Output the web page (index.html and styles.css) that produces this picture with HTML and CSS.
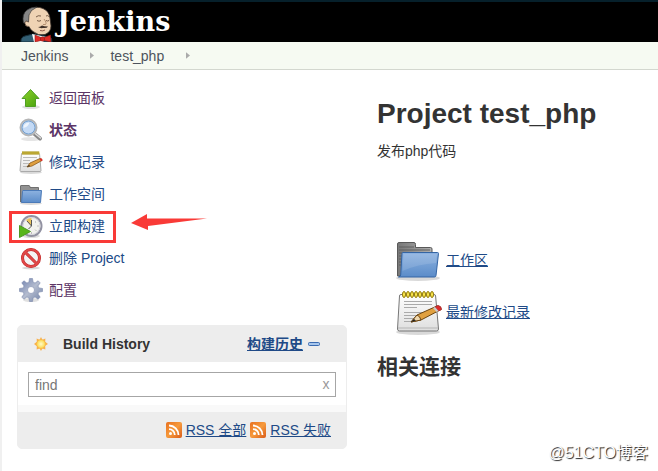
FILE: index.html
```
<!DOCTYPE html>
<html lang="zh-CN">
<head>
  <meta charset="utf-8">
  <title>test_php [Jenkins]</title>
  <link rel="stylesheet" href="styles.css">
</head>
<body>
  <!-- shared icon shapes -->
  <svg class="defs" width="0" height="0" aria-hidden="true">
    <defs>
      <linearGradient id="blue" x1="0" y1="0" x2="0" y2="1"><stop offset="0" stop-color="#8db2e0"/><stop offset="1" stop-color="#5b8cc9"/></linearGradient>
      <linearGradient id="grey" x1="0" y1="0" x2="1" y2="0"><stop offset="0" stop-color="#777"/><stop offset="1" stop-color="#b0b0b0"/></linearGradient>
      <linearGradient id="paper" x1="0" y1="0" x2="0" y2="1"><stop offset="0" stop-color="#fff"/><stop offset="1" stop-color="#dedede"/></linearGradient>
      <linearGradient id="green" x1="0" y1="0" x2="1" y2="1"><stop offset="0" stop-color="#8fd32c"/><stop offset="1" stop-color="#45a00c"/></linearGradient>
      <linearGradient id="orange" x1="0" y1="0" x2="1" y2="1"><stop offset="0" stop-color="#e8701f"/><stop offset=".5" stop-color="#f69a3c"/><stop offset="1" stop-color="#d95c1a"/></linearGradient>
      <linearGradient id="gear" x1="0" y1="0" x2="1" y2="1"><stop offset="0" stop-color="#6d7fae"/><stop offset=".5" stop-color="#b4bccf"/><stop offset="1" stop-color="#7283a8"/></linearGradient>
      <radialGradient id="sun"><stop offset="0" stop-color="#fffbc8"/><stop offset="1" stop-color="#fcd94a"/></radialGradient>
    </defs>
    <symbol id="folder" viewBox="0 0 48 48">
      <ellipse cx="24" cy="42" rx="22" ry="3" fill="#000" opacity=".15"/>
      <path d="M3.500 40V8q0-1.500 1.500-1.500h15q1.500 0 1.500 2V11.500h15q1.500 0 1.500 1.500v27z" fill="url(#grey)" stroke="#595959"/>
      <path d="M5 11h15M5 14h31M5 17h4M5 20h4M5 23h3M5 26h3M5 29h3" stroke="#5f5f5f"/>
      <path d="M9 16.500h34.500q1 0 1 1L42 39.500q-.2 1.500-1.500 1.500H4.500q2-.5 2.200-2L8 17.500q0-1 1-1z" fill="url(#blue)" stroke="#3465a4"/>
      <path d="M9.500 18h33.500L42 27Q24 28 8.500 35z" fill="#fff" opacity=".12"/>
    </symbol>
    <symbol id="notepad" viewBox="0 0 48 48">
      <ellipse cx="24" cy="44" rx="22" ry="3" fill="#000" opacity=".15"/>
      <path d="M7 6.500h33q1.500 0 1.600 1.500L44.500 41q0 2-2 2h-37q-2 0-2-2L5.500 8q0-1.500 1.500-1.500z" fill="url(#paper)" stroke="#777"/>
      <path d="M4 40h40" stroke="#b5b5b5"/>
      <path d="M10 13.500h28M10 16.500h28M10 19.500h13M10 24.500h24M10 27.500h22M10 30.500h14M10 33.500h12" stroke="#aaa"/>
      <g fill="#fce94f" stroke="#8a7100">
        <ellipse cx="10" cy="6.500" rx="1.500" ry="3"/><ellipse cx="14" cy="6.500" rx="1.500" ry="3"/><ellipse cx="18" cy="6.500" rx="1.500" ry="3"/><ellipse cx="22" cy="6.500" rx="1.500" ry="3"/><ellipse cx="26" cy="6.500" rx="1.500" ry="3"/><ellipse cx="30" cy="6.500" rx="1.500" ry="3"/><ellipse cx="34" cy="6.500" rx="1.500" ry="3"/><ellipse cx="38" cy="6.500" rx="1.500" ry="3"/>
      </g>
      <path d="M17 34l6-7L43 18q4 0 4 3.500L27 32z" fill="#e0a040" stroke="#6b4410"/>
      <path d="M17 34l6-7q3 1 4 5z" fill="#efd8ae" stroke="#6b4410"/>
      <path d="M17 34l3-3 2 1.500z" fill="#222"/>
      <path d="M41 19l3-1.500q3.500.5 3.500 4l-3 1.500z" fill="#e02a2a" stroke="#a33"/>
      <path d="M39 20l2-1 3.500 4-2 1z" fill="#ccc"/>
    </symbol>
    <symbol id="rss" viewBox="0 0 16 16">
      <rect width="16" height="16" rx="2" fill="url(#orange)"/>
      <circle cx="4.500" cy="11.500" r="1.500" fill="#fff"/>
      <path d="M3 7.200a5.800 5.800 0 0 1 5.800 5.800M3 3.500a9.500 9.500 0 0 1 9.500 9.500" fill="none" stroke="#fff" stroke-width="1.800"/>
    </symbol>
  </svg>

  <header class="header">
    <a class="logo" href="#">
      <svg class="butler" viewBox="0 0 34 36" aria-hidden="true">
        <path d="M1 36q-.5-5 4-6l8-2 12 2 5 1q2 1 2 5z" fill="#335f74" stroke="#17303c"/>
        <path d="M12 28l2 8h9l3-5z" fill="#fff"/>
        <path d="M5 17Q3 7 9 3.500 16-.5 23 2.500 29 5 30 12l1 8q0 6-6 8.500-7 1.500-12-3-3-2-4-5-4 0-4-3.500z" fill="#efd3b4" stroke="#3a302a" stroke-width=".8"/>
        <path d="M3.500 17Q1.500 8 7 4q4-3 10-3-7 3-8 8l-.5 7q-3-2-3.500 1z" fill="#858585" stroke="#333" stroke-width=".7"/>
        <path d="M8.500 16q-4-2-3.500 1.500.5 3.500 4 3" fill="#efd3b4" stroke="#5a4538" stroke-width=".7"/>
        <path d="M16 11q2-2 5-1M26 10q1.500-1 3 .5M17 14.500q2 1.500 4 0M26 14.500q1.500 1 3 0" fill="none" stroke="#59402f" stroke-width=".8"/>
        <path d="M24 13q3 4 1.500 5.500H23" fill="none" stroke="#a27d60" stroke-width=".8"/>
        <path d="M18 21q2 0 4-1.500 2 1 6 1-1 2-5 1.500-3 .5-5-1z" fill="#40332b"/>
        <path d="M20 24.500q3 1 5-.5" fill="none" stroke="#7a3b2c" stroke-width=".8"/>
        <path d="M15 29l6 2.500v3L15 36zM30.500 29l-6.500 2.500v3l7 1.500z" fill="#e22b27" stroke="#8c1512" stroke-width=".6"/>
        <circle cx="22.500" cy="33" r="2.200" fill="#d32421" stroke="#8c1512" stroke-width=".5"/>
      </svg>
      <span>Jenkins</span>
    </a>
  </header>

  <nav class="breadcrumbs">
    <a href="#">Jenkins</a>
    <svg class="chevron" viewBox="0 0 5 8" aria-hidden="true"><path d="M0 0l5 4-5 4z" fill="#aaa"/></svg>
    <a href="#">test_php</a>
    <svg class="chevron" viewBox="0 0 5 8" aria-hidden="true"><path d="M0 0l5 4-5 4z" fill="#aaa"/></svg>
  </nav>

  <div class="page-body">
    <aside class="side-panel">
      <ul class="tasks">
        <li class="task">
          <svg class="icon" viewBox="0 0 24 24" aria-hidden="true">
            <ellipse cx="12" cy="21" rx="9" ry="2" fill="#000" opacity=".13"/>
            <path d="M11.500 3.500l8.500 9h-3.500v8h-10v-8H3z" fill="url(#green)" stroke="#4f9f22"/>
          </svg>
          <a class="visited" href="#">返回面板</a>
        </li>
        <li class="task">
          <svg class="icon" viewBox="0 0 24 24" aria-hidden="true">
            <ellipse cx="12" cy="21" rx="10" ry="2" fill="#000" opacity=".1"/>
            <path d="M15 15.500l6 5" stroke="#888" stroke-width="4" stroke-linecap="round"/>
            <path d="M15.500 15l6 5" stroke="#ddd" stroke-width="1.500" stroke-linecap="round"/>
            <circle cx="9.500" cy="9.500" r="8" fill="#c4daf5" stroke="#b5b5b5" stroke-width="2"/>
            <circle cx="9.500" cy="9.500" r="6.500" fill="none" stroke="#729fcf"/>
            <path d="M4.500 10q-.5-5 6-5.500Q9 9 4.500 10z" fill="#fff" opacity=".7"/>
          </svg>
          <a class="visited current" href="#">状态</a>
        </li>
        <li class="task">
          <svg class="icon" viewBox="0 0 24 24" aria-hidden="true">
            <ellipse cx="12" cy="22.500" rx="11" ry="1.500" fill="#000" opacity=".15"/>
            <path d="M2.500 3.500h18l1.500 17q0 1-1 1H2q-1 0-1-1z" fill="url(#paper)" stroke="#aaa"/>
            <path d="M3 3h17" stroke="#93801a" stroke-width="3"/>
            <path d="M3.500 3h17" stroke="#e3cf4a" stroke-width="3" stroke-dasharray="1 1"/>
            <path d="M4 7.500h14M4 10.500h7M4 13.500h9M4 16.500h5" stroke="#bbb"/>
            <path d="M8 17l3-4 10-4.500q2 0 2 2L13 16z" fill="#e0a040" stroke="#8a5a1c" stroke-width=".8"/>
            <path d="M8 17l2-2 1 1z" fill="#222"/>
            <path d="M20.500 9l1.500-.7q1.500.5 1.500 2.200l-1.500.7z" fill="#e02a2a"/>
          </svg>
          <a href="#">修改记录</a>
        </li>
        <li class="task">
          <svg class="icon" viewBox="0 0 24 24" aria-hidden="true">
            <ellipse cx="12" cy="21.500" rx="11" ry="1.500" fill="#000" opacity=".15"/>
            <path d="M1.500 20V4q0-.5.500-.5h8q1 0 1 2h8.500V20z" fill="#929292" stroke="#6f6f6f"/>
            <path d="M4 8.500h18.500l-1 12H2.500l1-11q0-1 .5-1z" fill="url(#blue)" stroke="#4b7ab8"/>
          </svg>
          <a href="#">工作空间</a>
        </li>
        <li class="task marked">
          <svg class="icon" viewBox="0 0 24 24" aria-hidden="true">
            <ellipse cx="12" cy="22" rx="9" ry="2" fill="#000" opacity=".13"/>
            <circle cx="12.500" cy="12" r="10" fill="#f2f2ee" stroke="#9292a2" stroke-width="2"/>
            <circle cx="12.500" cy="12" r="8.500" fill="none" stroke="#d4d4dc"/>
            <path d="M12.500 12L7 6q2.500-2 5.500-2z" fill="#e9c45c"/>
            <path d="M18.500 12h1M12.500 18.500v1M17 7.500l-.7.7M17 16.500l-.7-.7" stroke="#888"/>
            <path d="M8 7l4.500 5V6M12.500 12l-3 3" fill="none" stroke="#555"/>
            <path d="M.5 11.500l11 6-11 6z" fill="#57b51a" stroke="#4c9a22"/>
          </svg>
          <a href="#">立即构建</a>
          <svg class="arrow" viewBox="0 0 76 16" aria-hidden="true"><path d="M0 9L16 0v4.500L76 4.500 17 12v4z" fill="#f93a37"/></svg>
        </li>
        <li class="task">
          <svg class="icon" viewBox="0 0 24 24" aria-hidden="true">
            <ellipse cx="12" cy="22" rx="9" ry="1.500" fill="#000" opacity=".15"/>
            <circle cx="12" cy="12" r="8.500" fill="#f4f4f4" stroke="#bd2424" stroke-width="3"/>
            <path d="M6 6l12 12" stroke="#bd2424" stroke-width="3"/>
            <circle cx="12" cy="12" r="8.500" fill="none" stroke="#e04848" stroke-width="2"/>
            <path d="M6 6l12 12" stroke="#e04848" stroke-width="2"/>
          </svg>
          <a href="#">删除 Project</a>
        </li>
        <li class="task">
          <svg class="icon" viewBox="0 0 24 24" aria-hidden="true">
            <ellipse cx="12" cy="22" rx="8" ry="2" fill="#000" opacity=".12"/>
            <path fill-rule="evenodd" d="M10.500.5h3l.6 3.700 2 .8 3-2.200 2.100 2.100-2.200 3 .8 2 3.700.6v3l-3.700.6-.8 2 2.200 3-2.100 2.100-3-2.200-2 .8-.6 3.700h-3l-.6-3.700-2-.8-3 2.200-2.100-2.100 2.200-3-.8-2-3.700-.6v-3l3.700-.6.8-2-2.200-3 2.100-2.100 3 2.200 2-.8zM12 8.500a3.500 3.500 0 1 0 0 7 3.500 3.500 0 1 0 0-7z" fill="url(#gear)" stroke="#7b88ab" stroke-width=".6"/>
          </svg>
          <a class="visited" href="#">配置</a>
        </li>
      </ul>

      <section class="history">
        <div class="history-header">
          <svg class="sun" viewBox="0 0 16 16" aria-hidden="true">
            <path d="M8 0l1.600 3L13 1.700 12.800 5.500 16 8l-3.200 2 .2 4.200L9.600 13 8 16l-1.600-3L3 14.200 3.200 10.500 0 8l3.200-2.500L3 1.700 6.400 3z" fill="#f8b04c"/>
            <circle cx="8" cy="8" r="5" fill="url(#sun)" stroke="#f6b64a" stroke-width=".7"/>
          </svg>
          <h2>Build History</h2>
          <a class="trend" href="#">构建历史</a>
          <svg class="collapse" viewBox="0 0 12 4" aria-hidden="true"><rect x=".5" y=".5" width="11" height="3" rx="1" fill="#a7c6ec" stroke="#3a6ab0"/></svg>
        </div>
        <div class="search">
          <input type="text" placeholder="find" aria-label="find">
          <button type="button" class="clear">x</button>
        </div>
        <div class="history-footer">
          <svg class="rss" aria-hidden="true"><use href="#rss"/></svg>
          <a href="#">RSS 全部</a>
          <svg class="rss" aria-hidden="true"><use href="#rss"/></svg>
          <a href="#">RSS 失败</a>
        </div>
      </section>
    </aside>

    <main class="main-panel">
      <h1>Project test_php</h1>
      <p class="description">发布php代码</p>
      <div class="shortcuts">
        <div class="shortcut">
          <svg aria-hidden="true"><use href="#folder"/></svg>
          <a href="#">工作区</a>
        </div>
        <div class="shortcut">
          <svg aria-hidden="true"><use href="#notepad"/></svg>
          <a href="#">最新修改记录</a>
        </div>
      </div>
      <h2>相关连接</h2>
    </main>
  </div>

  <div class="watermark">@51CTO博客</div>
</body>
</html>
```

FILE: styles.css
```
*,
*::before {
  box-sizing: border-box;
}

body {
  position: relative;
  margin: 0;
  min-height: 100vh;
  border-left: 2px solid #f0f0f0;
  background: #fff;
  color: #333;
  font-family: "Liberation Sans", "Noto Sans CJK SC", sans-serif;
  font-size: 14px;
  line-height: 20px;
}

.defs {
  position: absolute;
}

a {
  color: #204a87;
}

h1,
h2,
p,
ul {
  margin: 0;
  padding: 0;
}

.header {
  height: 42px;
  border-top: 2px solid #06202b;
  background: #000;
}

.logo {
  display: flex;
  align-items: center;
  gap: 3px;
  height: 40px;
  padding-left: 18px;
  color: #fff;
  font-family: "DejaVu Serif", serif;
  font-size: 27px;
  font-weight: bold;
  line-height: 36px;
  text-decoration: none;
}

.butler {
  align-self: flex-end;
  width: 34px;
  height: 36px;
}

.breadcrumbs {
  display: flex;
  align-items: center;
  height: 28px;
  padding-left: 19px;
  border-bottom: 1px solid #d3d7cf;
  background: #f6faf2;
}

.breadcrumbs a {
  color: #4d545d;
  text-decoration: none;
}

.chevron {
  width: 4px;
  height: 7px;
  margin: 0 16px 0 22px;
}

.page-body {
  display: flex;
  gap: 30px;
  padding: 12px 15px;
}

.side-panel {
  flex: none;
  width: 330px;
}

.tasks {
  list-style: none;
  margin-bottom: 19px;
}

.task {
  position: relative;
  display: flex;
  align-items: center;
  gap: 6px;
  height: 32px;
  padding-left: 2px;
}

.task a {
  text-decoration: none;
}

.task .visited {
  color: #5c3566;
}

.task .current {
  font-weight: bold;
}

.icon {
  width: 24px;
  height: 24px;
}

.marked::before {
  content: "";
  position: absolute;
  top: 1px;
  left: -8px;
  width: 107px;
  height: 32px;
  border: 3px solid #f93a37;
}

.arrow {
  position: absolute;
  top: 4px;
  left: 114px;
  width: 76px;
  height: 16px;
}

.history {
  border: 1px solid #ededed;
  border-radius: 5px;
  background: #ededed;
}

.history-header {
  display: flex;
  align-items: center;
  height: 36px;
  padding: 0 26px 0 16px;
}

.history-header h2 {
  margin-left: 15px;
  font-size: 14px;
}

.sun {
  width: 14px;
  height: 14px;
}

.trend {
  margin-left: auto;
  font-weight: bold;
}

.collapse {
  width: 12px;
  height: 4px;
  margin-left: 5px;
}

.search {
  position: relative;
  padding: 10px 10px 8px;
  border-bottom: 7px solid #f9f9f9;
  background: #fff;
}

.search input {
  display: block;
  width: 100%;
  height: 25px;
  padding: 0 24px 0 6px;
  border: 1px solid #a6a6a6;
  background: #fff;
  color: #333;
  font: inherit;
}

.search input::placeholder {
  color: #777;
  opacity: 1;
}

.clear {
  position: absolute;
  top: 12px;
  right: 12px;
  width: 16px;
  height: 20px;
  padding: 0;
  border: 0;
  background: none;
  color: #999;
  font: inherit;
}

.history-footer {
  display: flex;
  align-items: center;
  justify-content: flex-end;
  gap: 4px;
  height: 36px;
  padding-right: 15px;
}

.rss {
  width: 16px;
  height: 16px;
}

.main-panel {
  flex: 1;
  padding-top: 16px;
}

.main-panel h1 {
  font-size: 28px;
  line-height: 32px;
}

.description {
  margin-top: 11px;
}

.shortcuts {
  display: grid;
  gap: 4px;
  margin: 75px 0 16px 17px;
}

.shortcut {
  display: flex;
  align-items: center;
  gap: 4px;
}

.shortcut svg {
  width: 48px;
  height: 48px;
}

.main-panel h2 {
  font-size: 21px;
  line-height: 30px;
}

.watermark {
  position: absolute;
  right: 10px;
  bottom: 6px;
  color: #fff;
  font-size: 16px;
  line-height: 24px;
  text-shadow: 1px 1px 1px #222;
}
```
